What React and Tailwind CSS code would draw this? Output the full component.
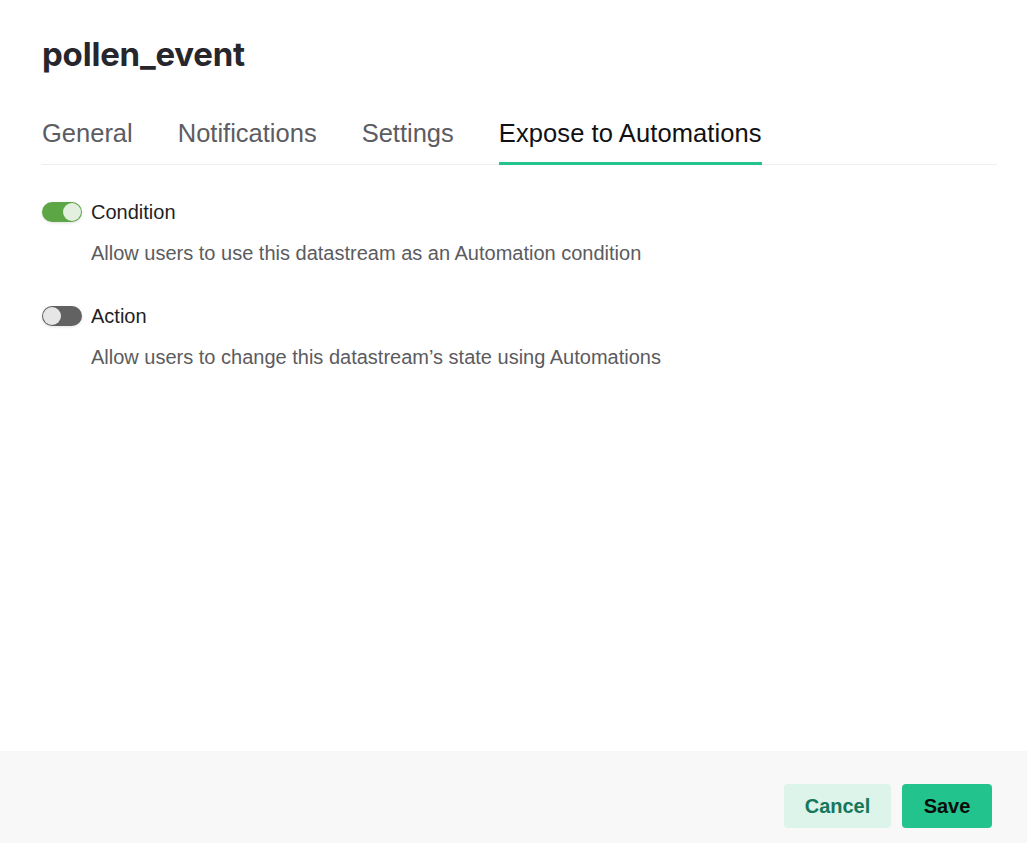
import React, { useState } from 'react';

const tabs = ['General', 'Notifications', 'Settings', 'Expose to Automations'];

const Toggle = ({ on, onClick }) => (
  <button
    onClick={onClick}
    className={`relative w-[40px] h-[20px] rounded-full shrink-0 shadow-[0_1px_3px_rgba(0,0,0,0.12)] ${on ? 'bg-[#5da646]' : 'bg-[#626262]'}`}
  >
    <span
      className={`absolute top-[1px] w-[18px] h-[18px] rounded-full ${on ? 'left-[21px] bg-[#e3efdf]' : 'left-[1px] bg-[#e6e6e6]'}`}
    ></span>
  </button>
);

const Option = ({ on, onClick, label, desc }) => (
  <div>
    <div className="flex items-center gap-[9px] h-[20px]">
      <Toggle on={on} onClick={onClick} />
      <span className="text-[20px] text-[#1f1f24]">{label}</span>
    </div>
    <p className="mt-[19px] ml-[49px] text-[20px] leading-[24px] text-[#5b5b60]">{desc}</p>
  </div>
);

export default function App() {
  const [cond, setCond] = useState(true);
  const [action, setAction] = useState(false);

  return (
    <div className="w-[1027px] h-[843px] bg-white flex flex-col font-['Liberation_Sans',Arial,sans-serif]">
      <div className="flex-1 px-[42px] pr-[30px]">
        <h1 className="pt-[34px] text-[33px] leading-[40px] font-bold text-[#26262c] font-['Inter',sans-serif] tracking-[-0.2px]">
          pollen_event
        </h1>
        <div className="mt-[44px] flex gap-[45px] border-b border-[#eeeeee] h-[47px]">
          {tabs.map((t, i) => (
            <div
              key={t}
              className={`relative text-[25.5px] leading-[30px] ${i === 3 ? 'text-[#111114] tracking-[0.1px]' : 'text-[#5c5c62]'}`}
            >
              {t}
              {i === 3 && (
                <span className="absolute left-0 right-0 top-[44px] h-[3px] bg-[#22c38d]"></span>
              )}
            </div>
          ))}
        </div>
        <div className="mt-[37px] flex flex-col gap-[41px]">
          <Option
            on={cond}
            onClick={() => setCond(!cond)}
            label="Condition"
            desc="Allow users to use this datastream as an Automation condition"
          />
          <Option
            on={action}
            onClick={() => setAction(!action)}
            label="Action"
            desc="Allow users to change this datastream’s state using Automations"
          />
        </div>
      </div>
      <div className="h-[92px] bg-[#f8f8f8] flex items-start justify-end gap-[11px] pr-[35px] pt-[33px]">
        <button className="w-[107px] h-[44px] rounded-[4px] bg-[#dcf4ea] text-[#17775a] text-[20px] font-bold">
          Cancel
        </button>
        <button className="w-[90px] h-[44px] rounded-[4px] bg-[#22c38d] text-[#0b0b0b] text-[20px] font-bold">
          Save
        </button>
      </div>
    </div>
  );
}
